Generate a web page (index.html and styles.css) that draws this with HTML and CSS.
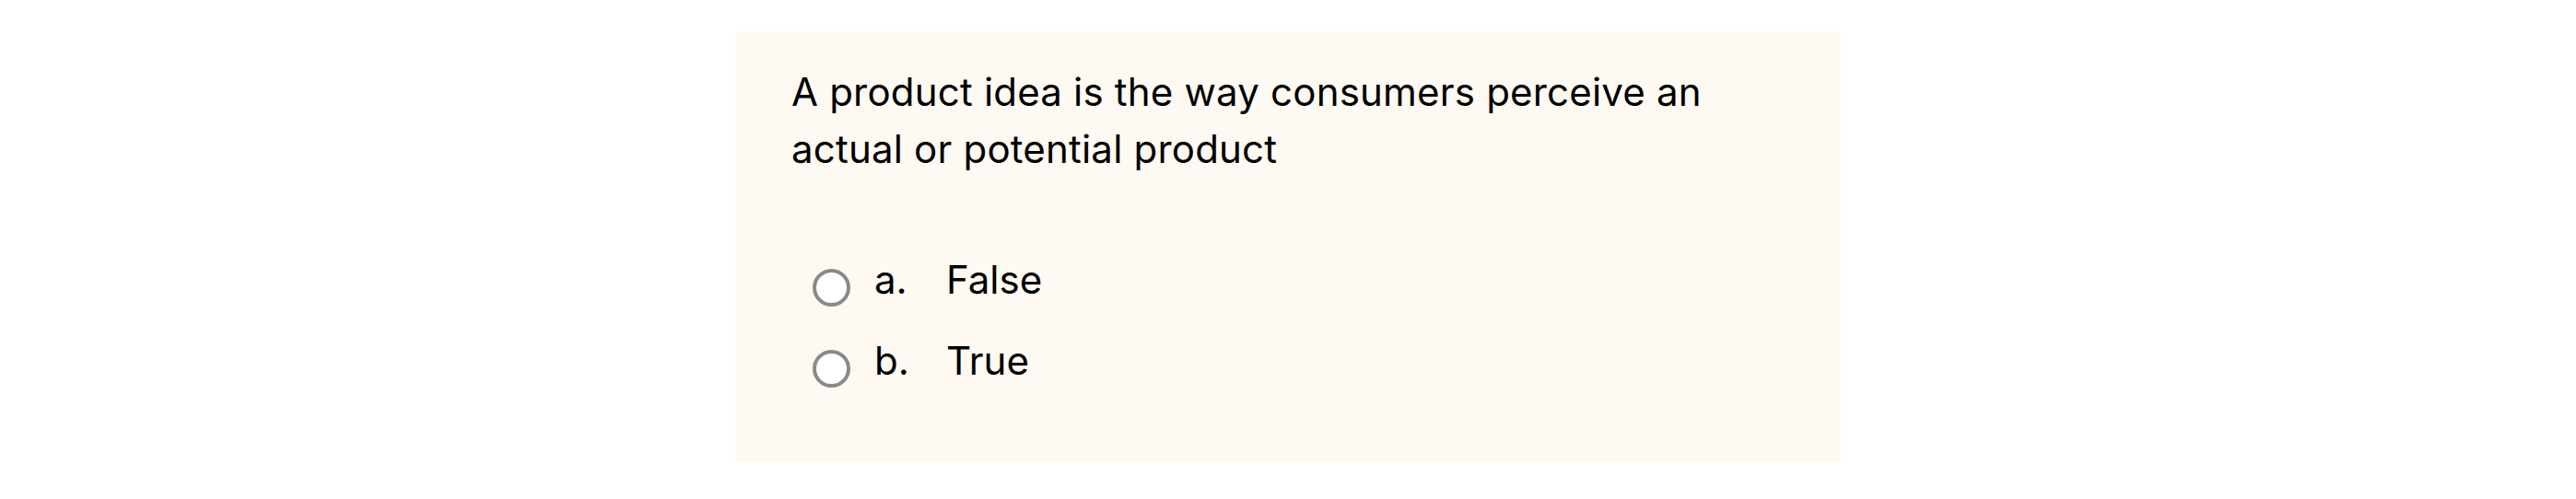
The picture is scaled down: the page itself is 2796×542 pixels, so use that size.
FILE: index.html
```html
<!DOCTYPE html>
<html lang="en">
<head>
<meta charset="utf-8">
<title>Question</title>
<link rel="stylesheet" href="styles.css">
</head>
<body>
<div class="card">
  <p class="question">A product idea is the way consumers perceive an actual or potential product</p>
  <div class="options">
    <label class="option">
      <span class="radio"></span>
      <span class="letter">a.</span>
      <span class="answer">False</span>
    </label>
    <label class="option">
      <span class="radio"></span>
      <span class="letter">b.</span>
      <span class="answer">True</span>
    </label>
  </div>
</div>
</body>
</html>
```
FILE: styles.css
```css
html, body {
  margin: 0;
  padding: 0;
  background: #ffffff;
}
body {
  font-family: Inter, "Noto Sans", sans-serif;
  color: #000;
}
.card {
  width: 1200px;
  box-sizing: border-box;
  margin: 34px auto 0;
  height: 468px;
  background: #fef9f2;
  padding: 35px 61px 0;
}
.question {
  margin: 0;
  font-size: 42px;
  line-height: 62px;
  letter-spacing: 0.2px;
  width: 1060px;
}
.options {
  margin-top: 89px;
  display: flex;
  flex-direction: column;
  gap: 44px;
  padding-left: 23px;
}
.option {
  display: flex;
  align-items: center;
  font-size: 42px;
  line-height: 44px;
  height: 44px;
}
.radio {
  width: 33px;
  height: 33px;
  border: 4px solid #8a8a8a;
  border-radius: 50%;
  background: #fff;
  flex: none;
  margin-right: 26px;
  margin-top: 16px;
}
.letter {
  width: 78px;
}
```
